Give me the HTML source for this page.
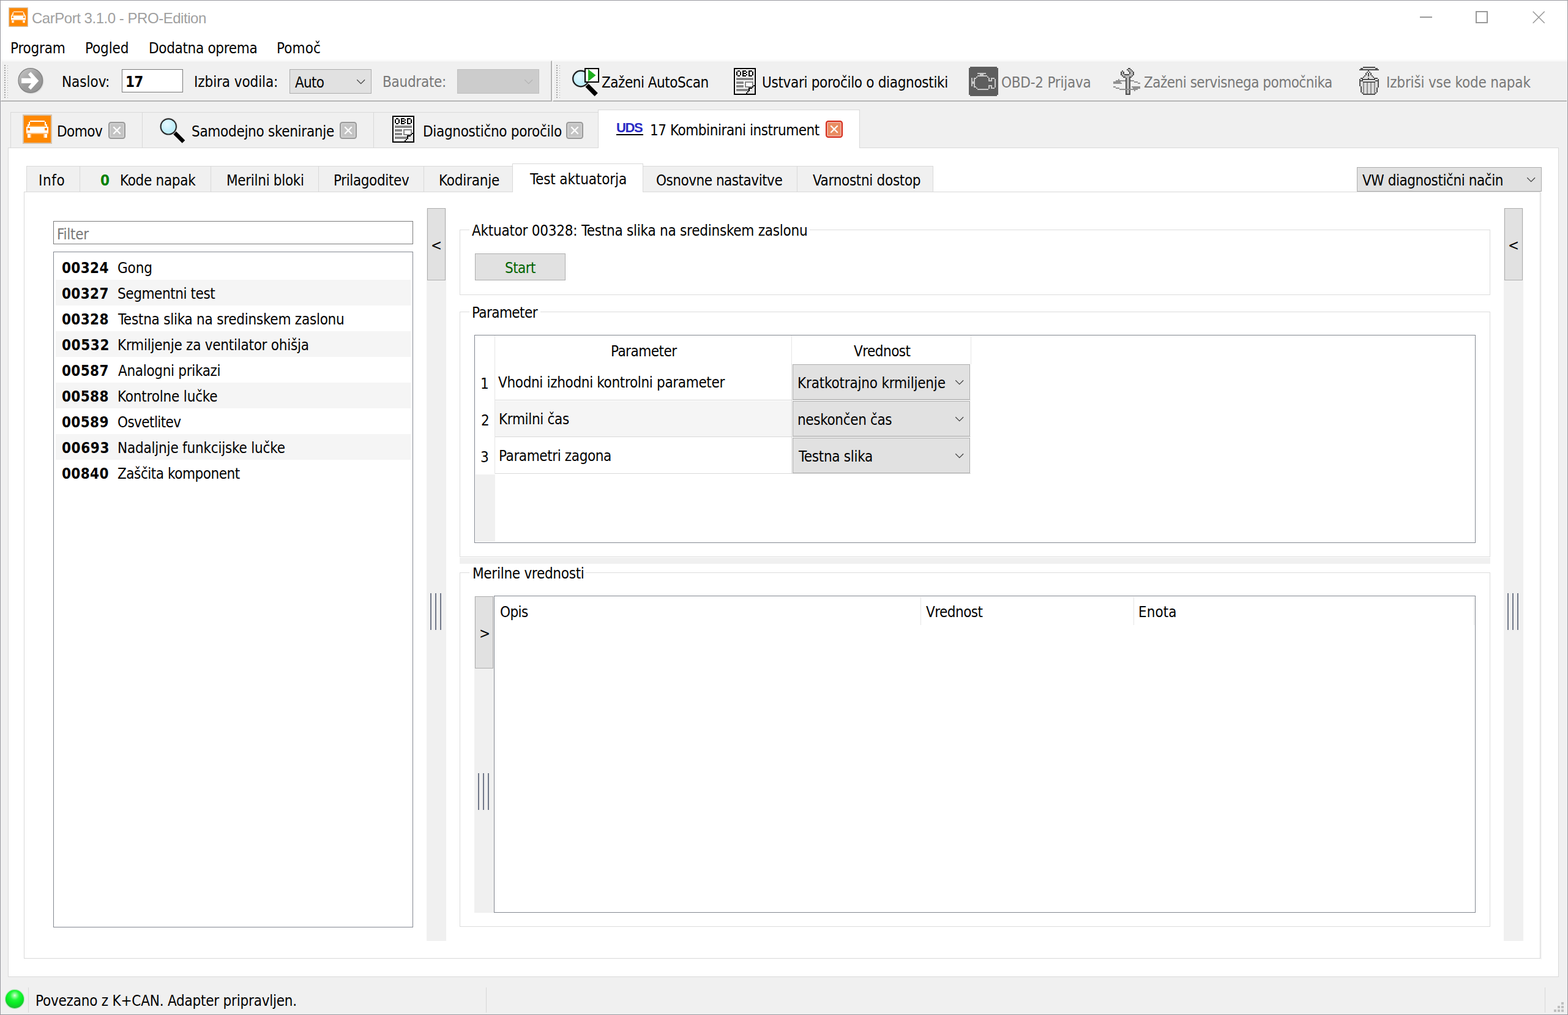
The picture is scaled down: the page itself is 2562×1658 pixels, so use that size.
<!DOCTYPE html>
<html lang="sl">
<head>
<meta charset="utf-8">
<title>CarPort 3.1.0 - PRO-Edition</title>
<style>
html,body{margin:0;padding:0;background:#f0f0f0;}
body{width:2562px;height:1658px;overflow:hidden;}
#win{position:relative;width:2562px;height:1658px;overflow:hidden;background:#f0f0f0;font-family:'DejaVu Sans Condensed','DejaVu Sans','Liberation Sans',sans-serif;font-size:24px;line-height:30px;color:#000;}
#win header,#win nav,#win section,#win footer,#win ul,#win li{display:block;position:static;margin:0;padding:0;border:0;list-style:none;}
#win div,#win span,#win svg{position:absolute;box-sizing:border-box;}
#win span.t{white-space:nowrap;line-height:30px;height:30px;}
.b{font-weight:bold;}
.gray{color:#787878;}
.tt{font-family:'Liberation Sans','DejaVu Sans',sans-serif;color:#a0a0a0;}
.white{background:#fff;}
.btn{background:#e1e1e1;border:1px solid #adadad;}
.pane{background:#fff;border:1px solid #d9d9d9;}
.tab{background:#f0f0f0;border:1px solid #d9d9d9;}
.tabsel{background:#fff;border:1px solid #d9d9d9;border-bottom:none;}
.edit{background:#fff;border:1px solid #7a7a7a;}
.list{background:#fff;border:1px solid #828790;}
.alt{background:#f5f5f5;}
.gb{border:1px solid #dcdcdc;}
.gbt{background:#fff;}
.strip{background:#f0f0f0;}
.grip i{position:absolute;top:0;width:2px;height:100%;background:#717889;}
.hdl{background:linear-gradient(#a6a6a6 50%,transparent 50%) 0 0/2px 4px repeat-y;}
.hdl i{position:absolute;left:5px;top:1px;width:1px;height:53px;background:linear-gradient(#a6a6a6 25%,transparent 25%) 0 0/1px 4px repeat-y;}

</style>
</head>
<body>
<div id="win">
<header class="titlebar" aria-label="Window title bar">
<div class="white" style="left:1px;top:1px;width:2560px;height:99px;"></div>
<div style="left:1px;top:98px;width:2560px;height:1px;background:#f4f4f4;"></div>
<svg style="left:14px;top:12px" width="32" height="32" viewBox="0 0 24 24"><rect x="0.5" y="0.500" width="23" height="23" fill="#ff8800" stroke="#d6c3ac" stroke-width="1"/><path fill="#ffffff" d="M6 5h12v1h-12zM5 6h1v1h-1zM18 6h1v1h-1zM5 7h1v1h-1zM18 7h1v1h-1zM4 8h2v1h-2zM18 8h2v1h-2zM4 9h1v1h-1zM19 9h1v1h-1zM3 10h18v1h-18zM3 11h1v1h-1zM6 11h12v1h-12zM20 11h1v1h-1zM3 12h1v1h-1zM6 12h12v1h-12zM20 12h1v1h-1zM3 13h18v1h-18zM3 14h18v1h-18zM4 16h2v1h-2zM18 16h2v1h-2zM4 17h2v1h-2zM18 17h2v1h-2zM4 18h2v1h-2zM18 18h2v1h-2z"/><path fill="#ffa030" d="M5 9h14v1h-14z"/><path fill="#ffc080" d="M3 15h18v1h-18zM6 16h1v1h-1zM17 16h1v1h-1zM6 17h1v1h-1zM17 17h1v1h-1zM6 18h1v1h-1zM17 18h1v1h-1z"/></svg>
<span class="t tt" style="left:52px;top:15px;letter-spacing:-0.469px;">CarPort 3.1.0 - PRO-Edition</span>
<svg style="left:2310px;top:8px" width="230" height="40" viewBox="0 0 230 40"><g fill="none" stroke="#999" stroke-width="2"><path d="M10 20h20"/><rect x="102" y="11" width="18" height="18"/><path d="M194.7 10.7l19 19M213.7 10.7l-19 19" stroke-width="1.600"/></g></svg>
</header>
<nav class="menubar" aria-label="Menu bar">
<span class="t" style="left:17px;top:64px;letter-spacing:-0.200px;">Program</span>
<span class="t" style="left:139px;top:64px;letter-spacing:-0.140px;">Pogled</span>
<span class="t" style="left:243px;top:64px;letter-spacing:-0.323px;">Dodatna oprema</span>
<span class="t" style="left:452px;top:64px;letter-spacing:0.075px;">Pomoč</span>
</nav>
<section class="toolbars" aria-label="Toolbars">
<div style="left:1px;top:99px;width:901px;height:67px;background:#f0f0f0;border-top:1px solid #fff;border-left:1px solid #fbfbfb;border-right:2px solid #b4b4b4;border-bottom:2px solid #b4b4b4;"></div>
<div style="left:903px;top:99px;width:1657px;height:67px;background:#f0f0f0;border-top:1px solid #fff;border-left:1px solid #fff;border-bottom:2px solid #b4b4b4;"></div>
<div style="left:2px;top:163px;width:898px;height:1px;background:#f6f6f6;"></div>
<div style="left:904px;top:163px;width:1656px;height:1px;background:#f6f6f6;"></div>
<div style="left:1px;top:166px;width:2560px;height:1px;background:#f4f4f4;"></div>
<div class="hdl" style="left:7px;top:106px;width:8px;height:54px;"><i></i></div>
<div class="hdl" style="left:909px;top:106px;width:8px;height:54px;"><i></i></div>
<svg style="left:28px;top:109px" width="46" height="46" viewBox="0 0 46 46"><defs><linearGradient id="gg" x1="0.150" y1="0.100" x2="0.800" y2="0.900"><stop offset="0" stop-color="#c0c0c0"/><stop offset="0.550" stop-color="#9c9c9c"/><stop offset="1" stop-color="#949494"/></linearGradient><radialGradient id="gs" cx="0.500" cy="0.500" r="0.500"><stop offset="0.850" stop-color="#000" stop-opacity="0.220"/><stop offset="1" stop-color="#000" stop-opacity="0"/></radialGradient></defs><circle cx="22.800" cy="23.500" r="21.500" fill="url(#gs)"/><circle cx="21.800" cy="22.500" r="19.800" fill="url(#gg)" stroke="#808080" stroke-width="1.200"/><path d="M7.100 18.800h16l-5.100-6.300 4.200-3.900L35.300 23 22.200 37.500 18 33.500 23.100 27H7.100z" fill="#fff"/></svg>
<span class="t" style="left:101px;top:119px;letter-spacing:-0.033px;">Naslov:</span>
<div class="edit" style="left:199px;top:113px;width:100px;height:38px;"></div>
<span class="t b" style="left:205px;top:119px;letter-spacing:-0.700px;">17</span>
<span class="t" style="left:317px;top:119px;letter-spacing:-0.092px;">Izbira vodila:</span>
<div class="btn" style="left:473px;top:113px;width:134px;height:40px;"></div>
<span class="t" style="left:482px;top:120px;letter-spacing:-0.733px;">Auto</span>
<svg style="left:582px;top:129px" width="16" height="10" viewBox="0 0 16 10"><path d="M1.300 1.300l6.400 6.400 6.400-6.400" fill="none" stroke="#404040" stroke-width="1.250"/></svg>
<span class="t gray" style="left:625px;top:119px;letter-spacing:-0.275px;">Baudrate:</span>
<div style="left:747px;top:113px;width:134px;height:40px;background:#cccccc;border:1px solid #bfbfbf;"></div>
<svg style="left:856px;top:129px" width="16" height="10" viewBox="0 0 16 10"><path d="M1.300 1.300l6.400 6.400 6.400-6.400" fill="none" stroke="#b4b4b4" stroke-width="1.250"/></svg>
<svg style="left:932px;top:109px" width="50" height="50" viewBox="0 0 50 50"><defs><radialGradient id="lgs" cx="0.400" cy="0.350" r="0.450"><stop offset="0" stop-color="#e6f9fe"/><stop offset="0.600" stop-color="#d2f3fc"/><stop offset="1" stop-color="#c0eefa"/></radialGradient></defs><path d="M24.500 33l5.200-5.200L44.800 43l-5.200 5.200z" fill="#000"/><circle cx="17" cy="19.500" r="14.600" fill="#9a9a9a" opacity="0.450"/><circle cx="17" cy="19.500" r="12.800" fill="url(#lgs)" stroke="#1a1a1a" stroke-width="2.200"/><rect x="24" y="3" width="22" height="22" fill="#fff" stroke="#000" stroke-width="2"/><path d="M29 4v20l12.500-10z" fill="#1faf1f"/></svg>
<span class="t" style="left:983px;top:120px;letter-spacing:-0.479px;">Zaženi AutoScan</span>
<svg style="left:1199px;top:111px" width="36" height="44" viewBox="0 0 18 22" shape-rendering="crispEdges"><path fill="#000000" d="M0 0h18v1h-18zM0 1h1v1h-1zM17 1h1v1h-1zM0 2h1v1h-1zM3 2h2v1h-2zM7 2h3v1h-3zM12 2h3v1h-3zM17 2h1v1h-1zM0 3h1v1h-1zM2 3h1v1h-1zM5 3h1v1h-1zM7 3h1v1h-1zM10 3h1v1h-1zM12 3h1v1h-1zM15 3h1v1h-1zM17 3h1v1h-1zM0 4h1v1h-1zM2 4h1v1h-1zM5 4h1v1h-1zM7 4h3v1h-3zM12 4h1v1h-1zM15 4h1v1h-1zM17 4h1v1h-1zM0 5h1v1h-1zM2 5h1v1h-1zM5 5h1v1h-1zM7 5h1v1h-1zM10 5h1v1h-1zM12 5h1v1h-1zM15 5h1v1h-1zM17 5h1v1h-1zM0 6h1v1h-1zM3 6h2v1h-2zM7 6h3v1h-3zM12 6h3v1h-3zM17 6h1v1h-1zM0 7h1v1h-1zM17 7h1v1h-1zM0 8h1v1h-1zM17 8h1v1h-1zM0 9h1v1h-1zM17 9h1v1h-1zM0 10h1v1h-1zM17 10h1v1h-1zM0 11h1v1h-1zM17 11h1v1h-1zM0 12h1v1h-1zM17 12h1v1h-1zM0 13h1v1h-1zM17 13h1v1h-1zM0 14h1v1h-1zM16 14h2v1h-2zM0 15h1v1h-1zM15 15h1v1h-1zM17 15h1v1h-1zM0 16h1v1h-1zM12 16h3v1h-3zM17 16h1v1h-1zM0 17h1v1h-1zM12 17h1v1h-1zM17 17h1v1h-1zM0 18h1v1h-1zM12 18h1v1h-1zM17 18h1v1h-1zM0 19h1v1h-1zM11 19h1v1h-1zM17 19h1v1h-1zM0 20h1v1h-1zM10 20h1v1h-1zM17 20h1v1h-1zM0 21h18v1h-18z"/><path fill="#ffffff" d="M1 1h16v1h-16zM1 2h2v1h-2zM5 2h2v1h-2zM10 2h2v1h-2zM15 2h2v1h-2zM1 3h1v1h-1zM3 3h2v1h-2zM6 3h1v1h-1zM8 3h2v1h-2zM11 3h1v1h-1zM13 3h2v1h-2zM16 3h1v1h-1zM1 4h1v1h-1zM3 4h2v1h-2zM6 4h1v1h-1zM10 4h2v1h-2zM13 4h2v1h-2zM16 4h1v1h-1zM1 5h1v1h-1zM3 5h2v1h-2zM6 5h1v1h-1zM8 5h2v1h-2zM11 5h1v1h-1zM13 5h2v1h-2zM16 5h1v1h-1zM1 6h2v1h-2zM5 6h2v1h-2zM10 6h2v1h-2zM15 6h2v1h-2zM1 7h16v1h-16zM1 8h1v1h-1zM16 8h1v1h-1zM1 9h1v1h-1zM16 9h1v1h-1zM1 10h16v1h-16zM1 11h1v1h-1zM8 11h1v1h-1zM16 11h1v1h-1zM1 12h1v1h-1zM8 12h1v1h-1zM10 12h5v1h-5zM16 12h1v1h-1zM1 13h8v1h-8zM10 13h5v1h-5zM16 13h1v1h-1zM1 14h1v1h-1zM8 14h1v1h-1zM10 14h5v1h-5zM1 15h1v1h-1zM8 15h1v1h-1zM16 15h1v1h-1zM1 16h11v1h-11zM1 17h1v1h-1zM1 18h1v1h-1zM1 19h10v1h-10zM1 20h9v1h-9z"/><path fill="#888888" d="M2 8h14v1h-14zM2 9h14v1h-14zM2 11h6v1h-6zM9 11h7v1h-7zM2 12h6v1h-6zM9 12h1v1h-1zM15 12h1v1h-1zM9 13h1v1h-1zM15 13h1v1h-1zM2 14h6v1h-6zM9 14h1v1h-1zM15 14h1v1h-1zM2 15h6v1h-6zM9 15h6v1h-6zM2 17h10v1h-10zM2 18h10v1h-10z"/><path fill="#e6e6e6" d="M15 16h2v1h-2zM13 17h4v1h-4zM13 18h4v1h-4zM12 19h5v1h-5zM11 20h6v1h-6z"/></svg>
<span class="t" style="left:1245px;top:120px;letter-spacing:-0.317px;">Ustvari poročilo o diagnostiki</span>
<svg style="left:1583px;top:109px" width="48" height="48" viewBox="0 0 24 24" shape-rendering="crispEdges"><path d="M1 0h22v1h1v22h-1v1H1v-1H0V1h1z" fill="#5e5e5e"/><path fill="#c8c8c8" d="M7 5h7v1h-7zM9 6h3v1h-3zM7 7h8v1h-8zM6 8h1v1h-1zM15 8h1v1h-1zM2 9h1v1h-1zM4 9h2v1h-2zM16 9h1v1h-1zM18 9h3v1h-3zM2 10h1v1h-1zM4 10h1v1h-1zM16 10h1v1h-1zM18 10h1v1h-1zM21 10h1v1h-1zM2 11h1v1h-1zM4 11h1v1h-1zM16 11h3v1h-3zM21 11h1v1h-1zM2 12h3v1h-3zM21 12h1v1h-1zM2 13h3v1h-3zM21 13h1v1h-1zM2 14h1v1h-1zM4 14h1v1h-1zM21 14h1v1h-1zM2 15h1v1h-1zM4 15h1v1h-1zM16 15h3v1h-3zM21 15h1v1h-1zM4 16h2v1h-2zM16 16h1v1h-1zM18 16h1v1h-1zM21 16h1v1h-1zM6 17h1v1h-1zM16 17h1v1h-1zM18 17h3v1h-3zM7 18h9v1h-9z"/></svg>
<span class="t gray" style="left:1636px;top:120px;letter-spacing:-0.225px;">OBD-2 Prijava</span>
<svg style="left:1817px;top:109px" width="48" height="48" viewBox="0 0 24 24" shape-rendering="crispEdges"><path fill="#505050" d="M13 1h2v1h-2zM12 2h1v1h-1zM15 2h1v1h-1zM8 3h1v1h-1zM13 3h1v1h-1zM16 3h1v1h-1zM7 4h1v1h-1zM9 4h1v1h-1zM14 4h1v1h-1zM17 4h1v1h-1zM7 5h1v1h-1zM9 5h1v1h-1zM14 5h1v1h-1zM17 5h1v1h-1zM7 6h1v1h-1zM10 6h4v1h-4zM17 6h1v1h-1zM8 7h1v1h-1zM16 7h1v1h-1zM9 8h2v1h-2zM14 8h2v1h-2zM11 9h1v1h-1zM14 9h1v1h-1zM11 10h1v1h-1zM14 10h1v1h-1zM11 11h1v1h-1zM14 11h1v1h-1zM11 12h1v1h-1zM14 12h1v1h-1zM11 13h1v1h-1zM14 13h1v1h-1zM11 14h1v1h-1zM14 14h1v1h-1zM11 15h1v1h-1zM14 15h1v1h-1zM11 16h1v1h-1zM14 16h1v1h-1zM11 17h1v1h-1zM14 17h1v1h-1zM11 19h1v1h-1zM14 19h1v1h-1zM11 20h1v1h-1zM14 20h1v1h-1zM11 21h1v1h-1zM14 21h1v1h-1zM11 22h4v1h-4z"/><path fill="#b8b8b8" d="M13 2h2v1h-2zM14 3h2v1h-2zM8 4h1v1h-1zM15 4h2v1h-2zM8 5h1v1h-1zM15 5h2v1h-2zM8 6h2v1h-2zM14 6h3v1h-3zM9 7h7v1h-7zM11 8h3v1h-3zM12 9h2v1h-2zM12 10h2v1h-2zM12 11h2v1h-2zM12 12h2v1h-2zM12 13h2v1h-2zM12 14h2v1h-2zM12 15h2v1h-2zM12 16h2v1h-2zM12 17h2v1h-2zM12 19h2v1h-2zM12 20h2v1h-2zM12 21h2v1h-2z"/><path fill="#909090" d="M5 10h1v1h-1zM3 11h8v1h-8zM15 11h3v1h-3zM1 12h6v1h-6zM18 12h3v1h-3zM1 13h7v1h-7zM21 13h2v1h-2zM1 16h2v1h-2zM16 16h7v1h-7zM3 17h3v1h-3zM17 17h6v1h-6zM6 18h15v1h-15zM18 19h1v1h-1z"/></svg>
<span class="t gray" style="left:1869px;top:120px;letter-spacing:-0.508px;">Zaženi servisnega pomočnika</span>
<svg style="left:2221px;top:109px" width="32" height="46" viewBox="0 0 16 23" shape-rendering="crispEdges"><path fill="#505050" d="M3 0h10v1h-10zM1 1h2v1h-2zM13 1h2v1h-2zM0 2h16v1h-16zM7 3h1v1h-1zM6 4h1v1h-1zM8 4h1v1h-1zM5 5h1v1h-1zM7 5h1v1h-1zM9 5h1v1h-1zM5 6h1v1h-1zM7 6h1v1h-1zM9 6h1v1h-1zM4 7h1v1h-1zM7 7h1v1h-1zM10 7h1v1h-1zM3 8h1v1h-1zM11 8h1v1h-1zM1 9h2v1h-2zM7 9h1v1h-1zM12 9h3v1h-3zM0 10h1v1h-1zM2 10h11v1h-11zM15 10h1v1h-1zM0 11h3v1h-3zM13 11h3v1h-3zM0 12h1v1h-1zM3 12h10v1h-10zM15 12h1v1h-1zM0 13h1v1h-1zM15 13h1v1h-1zM0 14h1v1h-1zM15 14h1v1h-1zM0 15h1v1h-1zM15 15h1v1h-1zM1 16h1v1h-1zM15 16h1v1h-1zM1 17h1v1h-1zM14 17h1v1h-1zM1 18h1v1h-1zM14 18h1v1h-1zM1 19h1v1h-1zM14 19h1v1h-1zM1 20h1v1h-1zM14 20h1v1h-1zM2 21h1v1h-1zM13 21h1v1h-1zM3 22h10v1h-10z"/><path fill="#dcdcdc" d="M3 1h10v1h-10zM6 5h1v1h-1zM8 5h1v1h-1zM6 6h1v1h-1zM8 6h1v1h-1zM5 7h2v1h-2zM8 7h2v1h-2zM4 8h7v1h-7zM3 9h4v1h-4zM8 9h4v1h-4zM1 12h2v1h-2zM13 12h2v1h-2zM1 13h2v1h-2zM4 13h2v1h-2zM7 13h2v1h-2zM10 13h2v1h-2zM13 13h2v1h-2zM1 14h2v1h-2zM4 14h2v1h-2zM7 14h2v1h-2zM10 14h2v1h-2zM13 14h2v1h-2zM1 15h2v1h-2zM4 15h2v1h-2zM7 15h2v1h-2zM10 15h2v1h-2zM13 15h2v1h-2zM2 16h1v1h-1zM4 16h2v1h-2zM7 16h2v1h-2zM10 16h2v1h-2zM13 16h2v1h-2zM2 17h1v1h-1zM4 17h2v1h-2zM7 17h2v1h-2zM10 17h2v1h-2zM13 17h1v1h-1zM2 18h1v1h-1zM4 18h2v1h-2zM7 18h2v1h-2zM10 18h2v1h-2zM13 18h1v1h-1zM2 19h1v1h-1zM4 19h2v1h-2zM7 19h2v1h-2zM10 19h2v1h-2zM13 19h1v1h-1zM2 20h1v1h-1zM4 20h2v1h-2zM7 20h2v1h-2zM10 20h2v1h-2zM13 20h1v1h-1zM4 21h2v1h-2zM7 21h2v1h-2zM10 21h2v1h-2z"/><path fill="#ffffff" d="M7 4h1v1h-1zM1 10h1v1h-1zM13 10h2v1h-2zM3 11h10v1h-10z"/><path fill="#909090" d="M3 13h1v1h-1zM6 13h1v1h-1zM9 13h1v1h-1zM12 13h1v1h-1zM3 14h1v1h-1zM6 14h1v1h-1zM9 14h1v1h-1zM12 14h1v1h-1zM3 15h1v1h-1zM6 15h1v1h-1zM9 15h1v1h-1zM12 15h1v1h-1zM3 16h1v1h-1zM6 16h1v1h-1zM9 16h1v1h-1zM12 16h1v1h-1zM3 17h1v1h-1zM6 17h1v1h-1zM9 17h1v1h-1zM12 17h1v1h-1zM3 18h1v1h-1zM6 18h1v1h-1zM9 18h1v1h-1zM12 18h1v1h-1zM3 19h1v1h-1zM6 19h1v1h-1zM9 19h1v1h-1zM12 19h1v1h-1zM3 20h1v1h-1zM6 20h1v1h-1zM9 20h1v1h-1zM12 20h1v1h-1zM3 21h1v1h-1zM6 21h1v1h-1zM9 21h1v1h-1zM12 21h1v1h-1z"/></svg>
<span class="t gray" style="left:2265px;top:120px;letter-spacing:-0.176px;">Izbriši vse kode napak</span>
</section>
<section class="maintabs" aria-label="Document tabs">
<div class="pane" style="left:13px;top:241px;width:2534px;height:1355px;"></div>
<div class="tab" style="left:17px;top:183px;width:216px;height:59px;"></div>
<div class="tab" style="left:232px;top:183px;width:379px;height:59px;"></div>
<div class="tab" style="left:610px;top:183px;width:368px;height:59px;"></div>
<div class="tabsel" style="left:977px;top:179px;width:428px;height:63px;"></div>
<svg style="left:37px;top:187px" width="48" height="48" viewBox="0 0 24 24" shape-rendering="crispEdges"><rect x="0.5" y="0.500" width="23" height="23" fill="#ff8800" stroke="#d6c3ac" stroke-width="1"/><path fill="#ffffff" d="M6 5h12v1h-12zM5 6h1v1h-1zM18 6h1v1h-1zM5 7h1v1h-1zM18 7h1v1h-1zM4 8h2v1h-2zM18 8h2v1h-2zM4 9h1v1h-1zM19 9h1v1h-1zM3 10h18v1h-18zM3 11h1v1h-1zM6 11h12v1h-12zM20 11h1v1h-1zM3 12h1v1h-1zM6 12h12v1h-12zM20 12h1v1h-1zM3 13h18v1h-18zM3 14h18v1h-18zM4 16h2v1h-2zM18 16h2v1h-2zM4 17h2v1h-2zM18 17h2v1h-2zM4 18h2v1h-2zM18 18h2v1h-2z"/><path fill="#ffa030" d="M5 9h14v1h-14z"/><path fill="#ffc080" d="M3 15h18v1h-18zM6 16h1v1h-1zM17 16h1v1h-1zM6 17h1v1h-1zM17 17h1v1h-1zM6 18h1v1h-1zM17 18h1v1h-1z"/></svg>
<span class="t" style="left:93px;top:200px;letter-spacing:-0.550px;">Domov</span>
<svg style="left:177px;top:199px" width="28" height="28" viewBox="0 0 28 28"><rect x="1" y="1" width="26" height="26" rx="3.500" fill="#d0d0d0" stroke="#9a9a9a" stroke-width="2"/><rect x="4" y="4" width="20" height="20" rx="1" fill="#c4c4c4"/><path d="M8.300 8.300l11.400 11.400M19.700 8.300L8.300 19.700" stroke="#fff" stroke-width="2.300" fill="none"/></svg>
<svg style="left:260px;top:190.7px" width="46" height="46" viewBox="0 0 46 46"><defs><radialGradient id="lga" cx="0.400" cy="0.350" r="0.450"><stop offset="0" stop-color="#e6f9fe"/><stop offset="0.600" stop-color="#d2f3fc"/><stop offset="1" stop-color="#c0eefa"/></radialGradient></defs><path d="M23.300 28.400l4.600-4.600L42.300 38.200l-4.600 4.600z" fill="#000"/><circle cx="15.300" cy="15.800" r="14.400" fill="#8c8c8c" opacity="0.450"/><circle cx="15.300" cy="15.800" r="12.600" fill="url(#lga)" stroke="#222" stroke-width="1.900"/></svg>
<span class="t" style="left:313px;top:200px;letter-spacing:-0.300px;">Samodejno skeniranje</span>
<svg style="left:555px;top:199px" width="28" height="28" viewBox="0 0 28 28"><rect x="1" y="1" width="26" height="26" rx="3.500" fill="#d0d0d0" stroke="#9a9a9a" stroke-width="2"/><rect x="4" y="4" width="20" height="20" rx="1" fill="#c4c4c4"/><path d="M8.300 8.300l11.400 11.400M19.700 8.300L8.300 19.700" stroke="#fff" stroke-width="2.300" fill="none"/></svg>
<svg style="left:641px;top:189px" width="36" height="44" viewBox="0 0 18 22" shape-rendering="crispEdges"><path fill="#000000" d="M0 0h18v1h-18zM0 1h1v1h-1zM17 1h1v1h-1zM0 2h1v1h-1zM3 2h2v1h-2zM7 2h3v1h-3zM12 2h3v1h-3zM17 2h1v1h-1zM0 3h1v1h-1zM2 3h1v1h-1zM5 3h1v1h-1zM7 3h1v1h-1zM10 3h1v1h-1zM12 3h1v1h-1zM15 3h1v1h-1zM17 3h1v1h-1zM0 4h1v1h-1zM2 4h1v1h-1zM5 4h1v1h-1zM7 4h3v1h-3zM12 4h1v1h-1zM15 4h1v1h-1zM17 4h1v1h-1zM0 5h1v1h-1zM2 5h1v1h-1zM5 5h1v1h-1zM7 5h1v1h-1zM10 5h1v1h-1zM12 5h1v1h-1zM15 5h1v1h-1zM17 5h1v1h-1zM0 6h1v1h-1zM3 6h2v1h-2zM7 6h3v1h-3zM12 6h3v1h-3zM17 6h1v1h-1zM0 7h1v1h-1zM17 7h1v1h-1zM0 8h1v1h-1zM17 8h1v1h-1zM0 9h1v1h-1zM17 9h1v1h-1zM0 10h1v1h-1zM17 10h1v1h-1zM0 11h1v1h-1zM17 11h1v1h-1zM0 12h1v1h-1zM17 12h1v1h-1zM0 13h1v1h-1zM17 13h1v1h-1zM0 14h1v1h-1zM16 14h2v1h-2zM0 15h1v1h-1zM15 15h1v1h-1zM17 15h1v1h-1zM0 16h1v1h-1zM12 16h3v1h-3zM17 16h1v1h-1zM0 17h1v1h-1zM12 17h1v1h-1zM17 17h1v1h-1zM0 18h1v1h-1zM12 18h1v1h-1zM17 18h1v1h-1zM0 19h1v1h-1zM11 19h1v1h-1zM17 19h1v1h-1zM0 20h1v1h-1zM10 20h1v1h-1zM17 20h1v1h-1zM0 21h18v1h-18z"/><path fill="#ffffff" d="M1 1h16v1h-16zM1 2h2v1h-2zM5 2h2v1h-2zM10 2h2v1h-2zM15 2h2v1h-2zM1 3h1v1h-1zM3 3h2v1h-2zM6 3h1v1h-1zM8 3h2v1h-2zM11 3h1v1h-1zM13 3h2v1h-2zM16 3h1v1h-1zM1 4h1v1h-1zM3 4h2v1h-2zM6 4h1v1h-1zM10 4h2v1h-2zM13 4h2v1h-2zM16 4h1v1h-1zM1 5h1v1h-1zM3 5h2v1h-2zM6 5h1v1h-1zM8 5h2v1h-2zM11 5h1v1h-1zM13 5h2v1h-2zM16 5h1v1h-1zM1 6h2v1h-2zM5 6h2v1h-2zM10 6h2v1h-2zM15 6h2v1h-2zM1 7h16v1h-16zM1 8h1v1h-1zM16 8h1v1h-1zM1 9h1v1h-1zM16 9h1v1h-1zM1 10h16v1h-16zM1 11h1v1h-1zM8 11h1v1h-1zM16 11h1v1h-1zM1 12h1v1h-1zM8 12h1v1h-1zM10 12h5v1h-5zM16 12h1v1h-1zM1 13h8v1h-8zM10 13h5v1h-5zM16 13h1v1h-1zM1 14h1v1h-1zM8 14h1v1h-1zM10 14h5v1h-5zM1 15h1v1h-1zM8 15h1v1h-1zM16 15h1v1h-1zM1 16h11v1h-11zM1 17h1v1h-1zM1 18h1v1h-1zM1 19h10v1h-10zM1 20h9v1h-9z"/><path fill="#888888" d="M2 8h14v1h-14zM2 9h14v1h-14zM2 11h6v1h-6zM9 11h7v1h-7zM2 12h6v1h-6zM9 12h1v1h-1zM15 12h1v1h-1zM9 13h1v1h-1zM15 13h1v1h-1zM2 14h6v1h-6zM9 14h1v1h-1zM15 14h1v1h-1zM2 15h6v1h-6zM9 15h6v1h-6zM2 17h10v1h-10zM2 18h10v1h-10z"/><path fill="#e6e6e6" d="M15 16h2v1h-2zM13 17h4v1h-4zM13 18h4v1h-4zM12 19h5v1h-5zM11 20h6v1h-6z"/></svg>
<span class="t" style="left:691px;top:200px;letter-spacing:-0.310px;">Diagnostično poročilo</span>
<svg style="left:925px;top:199px" width="28" height="28" viewBox="0 0 28 28"><rect x="1" y="1" width="26" height="26" rx="3.500" fill="#d0d0d0" stroke="#9a9a9a" stroke-width="2"/><rect x="4" y="4" width="20" height="20" rx="1" fill="#c4c4c4"/><path d="M8.300 8.300l11.400 11.400M19.700 8.300L8.300 19.700" stroke="#fff" stroke-width="2.300" fill="none"/></svg>
<span class="t b" style="left:1007px;top:194px;letter-spacing:-1.350px;color:#2a2ac4;font-family:'Liberation Sans',sans-serif;font-size:22px;">UDS</span>
<div style="left:1007px;top:219px;width:44px;height:2px;background:#000;"></div>
<span class="t" style="left:1062px;top:198px;letter-spacing:-0.446px;">17 Kombinirani instrument</span>
<svg style="left:1349px;top:197px" width="28" height="28" viewBox="0 0 28 28"><rect x="1" y="1" width="26" height="26" rx="3.500" fill="#f0a898" stroke="#d42a18" stroke-width="2"/><rect x="4" y="4" width="20" height="20" rx="1" fill="#e98c60"/><path d="M8.300 8.300l11.400 11.400M19.700 8.300L8.300 19.700" stroke="#fff" stroke-width="2.300" fill="none"/></svg>
</section>
<section class="innertabs" aria-label="Control unit function tabs">
<div class="pane" style="left:39px;top:313px;width:2478px;height:1253px;"></div>
<div style="left:2517px;top:315px;width:2px;height:1252px;background:#f3f3f3;"></div>
<div class="tab" style="left:43px;top:271px;width:88px;height:43px;"></div>
<span class="t" style="left:63px;top:280px;letter-spacing:0.600px;">Info</span>
<div class="tab" style="left:130px;top:271px;width:215px;height:43px;"></div>
<span class="t" style="left:196px;top:280px;letter-spacing:-0.300px;">Kode napak</span>
<div class="tab" style="left:344px;top:271px;width:177px;height:43px;"></div>
<span class="t" style="left:370px;top:280px;letter-spacing:-0.308px;">Merilni bloki</span>
<div class="tab" style="left:520px;top:271px;width:173px;height:43px;"></div>
<span class="t" style="left:545px;top:280px;letter-spacing:-0.382px;">Prilagoditev</span>
<div class="tab" style="left:692px;top:271px;width:147px;height:43px;"></div>
<span class="t" style="left:717px;top:280px;letter-spacing:-0.213px;">Kodiranje</span>
<span class="t b" style="left:164px;top:280px;letter-spacing:-0.280px;color:#008000;">0</span>
<div class="tab" style="left:1050px;top:271px;width:253px;height:43px;"></div>
<span class="t" style="left:1072px;top:280px;letter-spacing:-0.482px;">Osnovne nastavitve</span>
<div class="tab" style="left:1302px;top:271px;width:223px;height:43px;"></div>
<span class="t" style="left:1328px;top:280px;letter-spacing:-0.313px;">Varnostni dostop</span>
<div class="tabsel" style="left:837px;top:267px;width:214px;height:47px;"></div>
<span class="t" style="left:866px;top:278px;letter-spacing:-0.121px;">Test aktuatorja</span>
<div class="btn" style="left:2217px;top:273px;width:302px;height:40px;"></div>
<span class="t" style="left:2226px;top:280px;letter-spacing:-0.435px;">VW diagnostični način</span>
<svg style="left:2494px;top:289px" width="16" height="10" viewBox="0 0 16 10"><path d="M1.300 1.300l6.400 6.400 6.400-6.400" fill="none" stroke="#404040" stroke-width="1.250"/></svg>
</section>
<section class="actuators" aria-label="Actuator list">
<div class="edit" style="left:87px;top:361px;width:588px;height:38px;"></div>
<span class="t gray" style="left:93px;top:368px;letter-spacing:-0.240px;">Filter</span>
<div class="list" style="left:87px;top:411px;width:588px;height:1104px;"></div>
<ul>
<li>
<span class="t b" style="left:101px;top:423px;letter-spacing:0.325px;">00324</span>
<span class="t" style="left:192px;top:423px;letter-spacing:-0.133px;">Gong</span>
</li>
<li>
<div class="alt" style="left:91px;top:457px;width:580px;height:42px;"></div>
<span class="t b" style="left:101px;top:465px;letter-spacing:0.325px;">00327</span>
<span class="t" style="left:192px;top:465px;letter-spacing:-0.415px;">Segmentni test</span>
</li>
<li>
<span class="t b" style="left:101px;top:507px;letter-spacing:0.325px;">00328</span>
<span class="t" style="left:193px;top:507px;letter-spacing:-0.245px;">Testna slika na sredinskem zaslonu</span>
</li>
<li>
<div class="alt" style="left:91px;top:541px;width:580px;height:42px;"></div>
<span class="t b" style="left:101px;top:549px;letter-spacing:0.575px;">00532</span>
<span class="t" style="left:192px;top:549px;letter-spacing:-0.247px;">Krmiljenje za ventilator ohišja</span>
</li>
<li>
<span class="t b" style="left:101px;top:591px;letter-spacing:0.325px;">00587</span>
<span class="t" style="left:193px;top:591px;letter-spacing:-0.320px;">Analogni prikazi</span>
</li>
<li>
<div class="alt" style="left:91px;top:625px;width:580px;height:42px;"></div>
<span class="t b" style="left:101px;top:633px;letter-spacing:0.325px;">00588</span>
<span class="t" style="left:192px;top:633px;letter-spacing:-0.186px;">Kontrolne lučke</span>
</li>
<li>
<span class="t b" style="left:101px;top:675px;letter-spacing:0.325px;">00589</span>
<span class="t" style="left:192px;top:675px;letter-spacing:-0.578px;">Osvetlitev</span>
</li>
<li>
<div class="alt" style="left:91px;top:709px;width:580px;height:42px;"></div>
<span class="t b" style="left:101px;top:717px;letter-spacing:0.575px;">00693</span>
<span class="t" style="left:192px;top:717px;letter-spacing:-0.204px;">Nadaljnje funkcijske lučke</span>
</li>
<li>
<span class="t b" style="left:101px;top:759px;letter-spacing:0.325px;">00840</span>
<span class="t" style="left:192px;top:759px;letter-spacing:-0.462px;">Zaščita komponent</span>
</li>
</ul>
</section>
<section class="splitters" aria-label="Splitters">
<div class="strip" style="left:697px;top:340px;width:32px;height:1197px;"></div>
<div class="btn" style="left:698px;top:340px;width:30px;height:118px;"></div>
<span class="t" style="left:704px;top:386px;letter-spacing:-0.280px;">&lt;</span>
<div class="grip" style="left:703px;top:969px;width:20px;height:60px;"><i style="left:0"></i><i style="left:8px"></i><i style="left:16px"></i></div>
<div class="strip" style="left:2457px;top:340px;width:32px;height:1197px;"></div>
<div class="btn" style="left:2458px;top:340px;width:30px;height:118px;"></div>
<span class="t" style="left:2464px;top:386px;letter-spacing:-0.280px;">&lt;</span>
<div class="grip" style="left:2463px;top:969px;width:20px;height:60px;"><i style="left:0"></i><i style="left:8px"></i><i style="left:16px"></i></div>
</section>
<section class="group-actuator" aria-label="Selected actuator">
<div class="gb" style="left:751px;top:375px;width:1684px;height:107px;"></div>
<div class="gbt" style="left:767px;top:366px;width:556px;height:20px;"></div>
<span class="t" style="left:771px;top:362px;letter-spacing:-0.245px;">Aktuator 00328: Testna slika na sredinskem zaslonu</span>
<div class="btn" style="left:776px;top:414px;width:148px;height:44px;"></div>
<span class="t" style="left:825px;top:423px;letter-spacing:-0.550px;color:#006400;">Start</span>
</section>
<section class="group-parameter" aria-label="Parameter">
<div class="gb" style="left:751px;top:509px;width:1684px;height:401px;"></div>
<div class="gbt" style="left:767px;top:500px;width:116px;height:20px;"></div>
<span class="t" style="left:771px;top:496px;letter-spacing:-0.588px;">Parameter</span>
<div class="list" style="left:775px;top:547px;width:1636px;height:340px;"></div>
<div style="left:776px;top:548px;width:33px;height:226px;background:#fff;border-right:1px solid #e5e5e5;"></div>
<div style="left:777px;top:775px;width:32px;height:110px;background:#f0f0f0;"></div>
<div style="left:809px;top:548px;width:485px;height:47px;border-right:1px solid #e5e5e5;"></div>
<div style="left:1294px;top:548px;width:293px;height:47px;border-right:1px solid #e5e5e5;"></div>
<span class="t" style="left:998px;top:559px;letter-spacing:-0.525px;">Parameter</span>
<span class="t" style="left:1395px;top:559px;letter-spacing:-0.529px;">Vrednost</span>
<div style="left:809px;top:653px;width:777px;height:1px;background:#d9d9d9;"></div>
<div style="left:1293px;top:594px;width:1px;height:59px;background:#d9d9d9;"></div>
<span class="t" style="left:785px;top:612px;letter-spacing:-0.280px;">1</span>
<span class="t" style="left:814px;top:610px;letter-spacing:-0.339px;">Vhodni izhodni kontrolni parameter</span>
<div class="btn" style="left:1295px;top:595px;width:290px;height:58px;"></div>
<span class="t" style="left:1303px;top:611px;letter-spacing:-0.191px;">Kratkotrajno krmiljenje</span>
<svg style="left:1560px;top:620px" width="16" height="10" viewBox="0 0 16 10"><path d="M1.300 1.300l6.400 6.400 6.400-6.400" fill="none" stroke="#404040" stroke-width="1.250"/></svg>
<div class="alt" style="left:809px;top:655px;width:484px;height:58px;"></div>
<div style="left:809px;top:713px;width:777px;height:1px;background:#d9d9d9;"></div>
<div style="left:1293px;top:654px;width:1px;height:59px;background:#d9d9d9;"></div>
<span class="t" style="left:786px;top:672px;letter-spacing:-0.280px;">2</span>
<span class="t" style="left:815px;top:670px;letter-spacing:-0.340px;">Krmilni čas</span>
<div class="btn" style="left:1295px;top:655px;width:290px;height:58px;"></div>
<span class="t" style="left:1303px;top:671px;letter-spacing:-0.350px;">neskončen čas</span>
<svg style="left:1560px;top:680px" width="16" height="10" viewBox="0 0 16 10"><path d="M1.300 1.300l6.400 6.400 6.400-6.400" fill="none" stroke="#404040" stroke-width="1.250"/></svg>
<div style="left:809px;top:773px;width:777px;height:1px;background:#d9d9d9;"></div>
<div style="left:1293px;top:714px;width:1px;height:59px;background:#d9d9d9;"></div>
<span class="t" style="left:785px;top:732px;letter-spacing:-0.280px;">3</span>
<span class="t" style="left:815px;top:730px;letter-spacing:-0.393px;">Parametri zagona</span>
<div class="btn" style="left:1295px;top:715px;width:290px;height:58px;"></div>
<span class="t" style="left:1305px;top:731px;letter-spacing:-0.291px;">Testna slika</span>
<svg style="left:1560px;top:740px" width="16" height="10" viewBox="0 0 16 10"><path d="M1.300 1.300l6.400 6.400 6.400-6.400" fill="none" stroke="#404040" stroke-width="1.250"/></svg>
<div class="strip" style="left:751px;top:911px;width:1684px;height:10px;"></div>
</section>
<section class="group-values" aria-label="Measured values">
<div class="gb" style="left:751px;top:935px;width:1684px;height:579px;"></div>
<div class="gbt" style="left:767px;top:926px;width:190px;height:20px;"></div>
<span class="t" style="left:772px;top:922px;letter-spacing:-0.281px;">Merilne vrednosti</span>
<div class="strip" style="left:775px;top:974px;width:32px;height:517px;"></div>
<div class="btn" style="left:776px;top:974px;width:30px;height:118px;"></div>
<span class="t" style="left:783px;top:1020px;letter-spacing:-0.280px;">&gt;</span>
<div class="grip" style="left:781px;top:1263px;width:20px;height:60px;"><i style="left:0"></i><i style="left:8px"></i><i style="left:16px"></i></div>
<div class="list" style="left:807px;top:973px;width:1604px;height:518px;"></div>
<div style="left:1504px;top:975px;width:1px;height:46px;background:#e5e5e5;"></div>
<div style="left:1852px;top:975px;width:1px;height:46px;background:#e5e5e5;"></div>
<div style="left:2408px;top:975px;width:1px;height:46px;background:#e5e5e5;"></div>
<span class="t" style="left:817px;top:985px;letter-spacing:-0.567px;">Opis</span>
<span class="t" style="left:1513px;top:985px;letter-spacing:-0.529px;">Vrednost</span>
<span class="t" style="left:1860px;top:985px;letter-spacing:0.075px;">Enota</span>
</section>
<footer class="statusbar" aria-label="Status bar">
<svg style="left:7px;top:1615px" width="34" height="34" viewBox="0 0 34 34"><defs><radialGradient id="bg" cx="0.500" cy="0.300" r="0.720"><stop offset="0" stop-color="#e0ffe0"/><stop offset="0.120" stop-color="#90ff98"/><stop offset="0.350" stop-color="#20f838"/><stop offset="0.600" stop-color="#08ee24"/><stop offset="1" stop-color="#1cb830"/></radialGradient></defs><circle cx="17" cy="17" r="16.200" fill="#40d050" opacity="0.300"/><circle cx="17" cy="17" r="15" fill="url(#bg)"/></svg>
<div style="left:46px;top:1613px;width:1px;height:41px;background:#d7d7d7;"></div>
<div style="left:794px;top:1613px;width:1px;height:41px;background:#d7d7d7;"></div>
<div style="left:2524px;top:1613px;width:1px;height:41px;background:#d7d7d7;"></div>
<span class="t" style="left:58px;top:1620px;letter-spacing:-0.222px;">Povezano z K+CAN. Adapter pripravljen.</span>
<svg style="left:2539px;top:1637px" width="16" height="16" viewBox="0 0 16 16" fill="#bfbfbf"><rect x="12" y="0" width="4" height="4"/><rect x="6" y="6" width="4" height="4"/><rect x="12" y="6" width="4" height="4"/><rect x="0" y="12" width="4" height="4"/><rect x="6" y="12" width="4" height="4"/><rect x="12" y="12" width="4" height="4"/></svg>
</footer>
<div style="left:0px;top:0px;width:2562px;height:1658px;border:1px solid #97979e;"></div>
</div>
</body>
</html>
